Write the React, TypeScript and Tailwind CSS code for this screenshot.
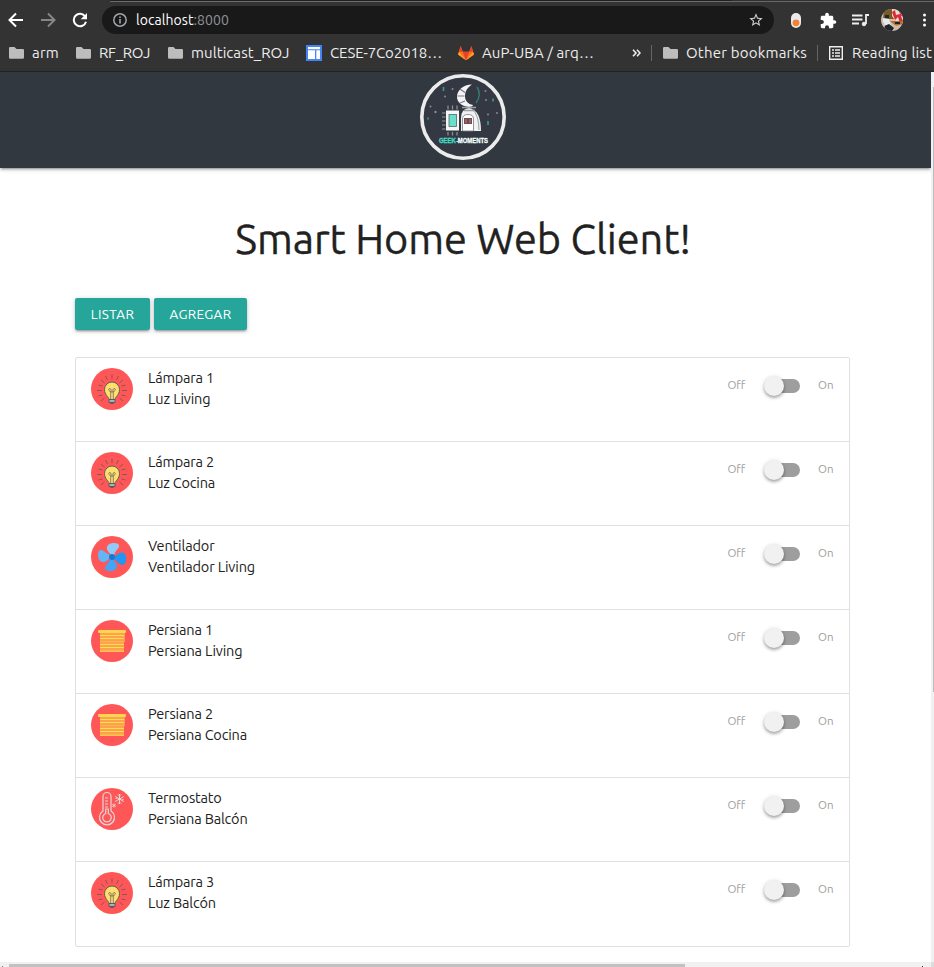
import { useLayoutEffect, useRef, type ReactNode } from "react";

/** Single-line label that spaces its letters to fill a given width. */
function Label({ text, width, className = "", children }: { text: string; width: number; className?: string; children?: ReactNode }) {
  const ref = useRef<HTMLSpanElement>(null);
  useLayoutEffect(() => {
    const el = ref.current;
    if (!el) return;
    el.style.letterSpacing = "0px";
    const natural = el.getBoundingClientRect().width;
    el.style.letterSpacing = `${(width - natural) / text.length}px`;
  }, [text, width]);
  return (
    <span ref={ref} className={`inline-block shrink-0 whitespace-pre ${className}`}>
      {children ?? text}
    </span>
  );
}

function Folder() {
  return (
    <svg className="h-[14px] w-[15px] shrink-0" viewBox="0 0 15 14">
      <path d="M1.5 1h4l2 2h6A1.3 1.3 0 0 1 15 4.3v7.2a1.3 1.3 0 0 1-1.3 1.3H1.3A1.3 1.3 0 0 1 0 11.500V2.300A1.3 1.3 0 0 1 1.500 1z" fill="#bdbdbd" />
    </svg>
  );
}

function Toolbar() {
  return (
    <div className="flex h-9 shrink-0 items-center">
      <svg className="ml-2 h-4 w-4 shrink-0" viewBox="0 0 16 16" fill="none" stroke="#fff" strokeWidth="2">
        <path d="M15 8H2M8 1.500L1.500 8L8 14.500" />
      </svg>
      <svg className="ml-4 h-4 w-4 shrink-0" viewBox="0 0 16 16" fill="none" stroke="#868686" strokeWidth="2">
        <path d="M1 8h13M8 1.500L14.500 8L8 14.500" />
      </svg>
      <svg className="ml-4 h-4 w-4 shrink-0" viewBox="0 0 16 16">
        <path d="M13.200 4.600A6.200 6.200 0 1 0 14 9.700" fill="none" stroke="#fff" strokeWidth="2" />
        <path d="M15 1v6.300H8.700z" fill="#fff" />
      </svg>
      <div className="ml-[14px] flex h-7 w-[672px] shrink-0 items-center rounded-full bg-[#191919] pl-[11px] pr-[10px]">
        <svg className="h-[14px] w-[14px]" viewBox="0 0 14 14">
          <circle cx="7" cy="7" r="6.200" fill="none" stroke="#a2a5a9" strokeWidth="1.500" />
          <path d="M7 6v4.500M7 3.500v1.600" stroke="#a2a5a9" strokeWidth="1.600" />
        </svg>
        <Label text="localhost:8000" width={93} className="ml-[9px] text-sm leading-5 text-white">
          localhost<span className="text-[#909499]">:8000</span>
        </Label>
        <svg className="ml-auto h-4 w-4" viewBox="0 0 24 24" fill="#d0d2d5">
          <path d="M22 9.240l-7.190-.62L12 2 9.190 8.630 2 9.240l5.460 4.730L5.820 21 12 17.270 18.180 21l-1.630-7.030L22 9.240zM12 15.400l-3.760 2.270 1-4.280-3.320-2.880 4.380-.38L12 6.100l1.710 4.040 4.380.38-3.320 2.880 1 4.280L12 15.400z" />
        </svg>
      </div>
      <svg className="ml-[17px] h-[15px] w-[10px] shrink-0" viewBox="0 0 10 15">
        <rect width="10" height="15" rx="5" fill="#e8eaed" />
        <circle cx="5" cy="9.800" r="3.400" fill="#f58233" />
      </svg>
      <svg className="ml-[19px] h-[17px] w-[17px] shrink-0" viewBox="1 0 23 23" fill="#fff">
        <path d="M20.500 11H19V7c0-1.100-.9-2-2-2h-4V3.500C13 2.120 11.880 1 10.500 1S8 2.120 8 3.500V5H4c-1.100 0-1.990.9-1.990 2v3.800H3.500c1.490 0 2.700 1.210 2.700 2.700s-1.210 2.700-2.700 2.700H2V20c0 1.100.9 2 2 2h3.800v-1.500c0-1.490 1.210-2.700 2.700-2.700 1.490 0 2.700 1.210 2.700 2.700V22H17c1.100 0 2-.9 2-2v-4h1.500c1.380 0 2.500-1.120 2.500-2.500S21.880 11 20.500 11z" />
      </svg>
      <svg className="ml-[15px] h-[15px] w-[18px] shrink-0" viewBox="0 0 18 15" fill="none" stroke="#eee" strokeWidth="1.800">
        <path d="M0 2.500h10.500M0 6.500h10.500M0 10.500h7M14 11V2h3" />
        <circle cx="12" cy="11" r="1.800" fill="#eee" strokeWidth="1" />
      </svg>
      <svg className="ml-[11px] h-[22px] w-[22px] shrink-0 overflow-hidden rounded-full" viewBox="0 0 22 22">
        <rect width="22" height="22" fill="#c9beb0" />
        <path d="M3 0h8v5l3 2v3H2z" fill="#7a5a22" />
        <path d="M11 0h11v14h-4l-4-3-3-4z" fill="#e8dcd9" />
        <path d="M11 3l3-2 1 5 4-1 3 7-3 2-2-6-3 3zM18 1l4 3v4l-3-2z" fill="#df2836" />
        <path d="M9 12h13v3l-7 2z" fill="#b46e2c" />
        <path d="M2 9l6 1 2 7-5 2-3-4z" fill="#e6e9ed" />
        <path d="M4 6h4v3H4zM3 17l5-2 5 4-2 3H4zM14 13h5v2h-5z" fill="#20252c" />
        <path d="M1 15l2-2 1 6zM12 16l6 1-4 4z" fill="#d5bc9c" />
      </svg>
      <svg className="ml-[20px] h-4 w-[3px] shrink-0" viewBox="0 0 3 16" fill="#fff">
        <circle cx="1.500" cy="3" r="1.500" /><circle cx="1.500" cy="8" r="1.500" /><circle cx="1.500" cy="13" r="1.500" />
      </svg>
    </div>
  );
}

function Bookmarks() {
  return (
    <div className="flex h-[30px] shrink-0 items-center pl-[9px] text-[15px] leading-5 text-[#ededed]">
      <Folder />
      <Label text="arm" width={27} className="ml-2" />
      <div className="w-[17px] shrink-0" />
      <Folder />
      <Label text="RF_ROJ" width={51} className="ml-[8px]" />
      <div className="w-[18px] shrink-0" />
      <Folder />
      <Label text="multicast_ROJ" width={98.500} className="ml-[8px]" />
      <svg className="ml-[16.500px] h-4 w-4 shrink-0" viewBox="0 0 16 16">
        <rect width="16" height="16" fill="#4285f4" />
        <path d="M2 2h12v2.200H2zM2 5.300h7V14H2zM10.300 5.300H14V14h-3.700z" fill="#fff" />
      </svg>
      <Label text="CESE-7Co2018…" width={112} className="ml-2" />
      <svg className="ml-[16px] h-4 w-4 shrink-0" viewBox="0 0 16 16">
        <path d="M0 9.500L2.600 1l2.200 5.800h6.400L13.400 1 16 9.500 8 15.300z" fill="#fc6d26" />
        <path d="M4.800 6.800h6.400L8 15.300z" fill="#e24329" />
        <path d="M0 9.500l1-2.700L8 15.300zM16 9.500l-1-2.700L8 15.300z" fill="#fca326" />
        <path d="M1 6.800L2.600 1l2.200 5.800zM11.200 6.800L13.400 1 15 6.800z" fill="#e24329" />
      </svg>
      <Label text="AuP-UBA / arq…" width={112} className="ml-2" />
      <svg className="ml-[38px] h-[8px] w-[9px] shrink-0" viewBox="0 0 9 8" fill="none" stroke="#eee" strokeWidth="1.600">
        <path d="M1 .8L4 4L1 7.200M5 .8L8 4L5 7.200" />
      </svg>
      <div className="ml-[10px] h-4 w-px shrink-0 bg-[#666]" />
      <div className="w-[11px] shrink-0" />
      <Folder />
      <Label text="Other bookmarks" width={121} className="ml-2" />
      <div className="ml-[10px] h-4 w-px shrink-0 bg-[#666]" />
      <svg className="ml-[11px] h-[14px] w-[14px] shrink-0" viewBox="0 0 14 14" fill="none" stroke="#eee" strokeWidth="1.400">
        <path d="M.7.7h12.600v12.600H.7zM3 4h2M6 4h5M3 7h2M6 7h5M3 10h2M6 10h5" />
      </svg>
      <Label text="Reading list" width={80} className="ml-[9px]" />
    </div>
  );
}

function Logo() {
  return (
    <svg className="h-[90px] w-[90px]" viewBox="0 0 90 90">
      <circle cx="45" cy="45" r="41.200" fill="#343843" stroke="#ececec" strokeWidth="3.600" />
      <path d="M54 12.500c-9 0-15 6-15 12.500 0 5 4 9 12 10 2 0 4-1 4-2-5-1-8-4-8-9s3-9 7-11.500z" fill="#f4f4f4" />
      <path d="M39.500 24h7M42 17l5 3.500M42 31l5-2" stroke="#777b84" strokeWidth="1.200" />
      <path d="M59 15q5 8-1 16" fill="none" stroke="#39766f" strokeWidth="1.500" />
      <path d="M43 59V46q0-9 8-10 12 2 12 23z" fill="#f1f1f1" />
      <path d="M54 37q7 6 7 21" fill="none" stroke="#8aa5a4" strokeWidth="1" />
      <path d="M44 35.500h14M46 38.500h11" stroke="#9da0a8" strokeWidth="1.500" />
      <path d="M44.500 59V47q0-4.500 5.500-4.500t5.500 4.500v12z" fill="#fff" stroke="#777a82" strokeWidth=".8" />
      <rect x="46" y="46" width="8" height="6" fill="#555760" />
      <path d="M48 47v4M52 47v4" stroke="#e64e47" strokeWidth="1.700" />
      <path d="M30 33.500v4M34.500 33.500v4M39 33.500v4M30 60v3.500M34.500 60v3.500M39 60v3.500M24 41h3.500M24 45h3.500M24 49h3.500M24 53h3.500M24 57h3.500" stroke="#8f939b" strokeWidth="1.200" />
      <rect x="28" y="38.500" width="13" height="20" fill="#f5f5f5" />
      <rect x="31" y="42.500" width="7.500" height="12" fill="#67dfcb" stroke="#56656b" strokeWidth=".8" />
      <g fill="#858993">
        <circle cx="27" cy="24.500" r="1" /><circle cx="34.500" cy="17" r="1" /><circle cx="67.500" cy="19" r="1" />
        <circle cx="68" cy="28" r="1" /><circle cx="12.500" cy="34.500" r="1" /><circle cx="17.500" cy="40" r="1.200" />
        <circle cx="79" cy="41" r="1" /><circle cx="70" cy="42.500" r="1" />
      </g>
      <path d="M25.500 15v4M75 26.500v3M70 49v4M10 45.500v2" stroke="#399b91" strokeWidth="1.600" />
      <text x="21" y="71" textLength="49" lengthAdjust="spacingAndGlyphs" fontFamily="Liberation Sans, sans-serif" fontSize="7" fontWeight="900" strokeWidth=".3" fill="url(#wordmark)" stroke="url(#wordmark)">
        GEEK-MOMENTS
      </text>
      <linearGradient id="wordmark" gradientUnits="userSpaceOnUse" x1="21" y1="0" x2="70" y2="0">
        <stop offset=".375" stopColor="#42d7c1" />
        <stop offset=".375" stopColor="#fff" />
      </linearGradient>
    </svg>
  );
}

type Kind = "bulb" | "fan" | "blind" | "thermo";

function DeviceIcon({ kind }: { kind: Kind }) {
  return (
    <svg className="h-[42px] w-[42px] shrink-0" viewBox="0 0 42 42">
      <circle cx="21" cy="21" r="21" fill="#ff5757" />
      {kind === "bulb" && (
        <g fill="none" stroke="#55545a" strokeWidth=".9">
          <path d="M21 6.500v4.500M14.500 8l2 4M27.500 8l-2 4M10 12l3.500 3M32 12l-3.500 3M7.500 17l4 1M34.500 17l-4 1M6 22.500h5M36 22.500h-5M7.500 28l4-1M34.500 28l-4-1M10 33l3.500-3M32 33l-3.500-3" strokeWidth=".7" />
          <path d="M18 31.500c0-2.500-4.500-4.500-4.500-10a7.500 7.500 0 0 1 15 0c0 5.500-4.500 7.500-4.500 10z" fill="#ffe06e" />
          <path d="M19.700 31V24l-1-1c-1.500-.5-1.200-2.800.3-2.500s1 2.500 1 3.500h2c0-1-.5-3.200 1-3.500s1.800 2 .3 2.500l-1 1v7" strokeWidth=".7" />
          <path d="M18 31.500h6v3h-6z" fill="#9fb4bd" />
          <path d="M19.500 35.500h3" />
        </g>
      )}
      {kind === "fan" && (
        <>
          <path d="M21 21c-2-5-6-6-5-10 1-5 11-5 12-2 1 4-5 5-5 12z" fill="#90caf9" />
          <path d="M21 21c-5 2-5 6-10 5-5-2-5-10-2-12 4-1 6 5 12 5z" fill="#64b5f6" />
          <path d="M21 21c6-1 7-6 12-4 4 3 2 12-1 12-5 0-5-5-11-6z" fill="#2196f3" />
          <path d="M21 21c1 5 6 6 5 10-1 5-10 5-12 2-1-4 5-5 5-12z" fill="#42a5f5" />
          <circle cx="21" cy="21" r="3" fill="#1976d2" />
        </>
      )}
      {kind === "blind" && (
        <>
          <rect x="9" y="11" width="24" height="20.500" fill="#ffb24d" />
          <path d="M9 15.500h24M9 18.500h24M9 24.500h24M9 27.500h24" stroke="#ffdf52" strokeWidth="1.100" />
          <path d="M9 14h24M9 17h24M9 20h24M9 23h24M9 26h24M9 29h24" stroke="#fb8b4b" strokeWidth=".8" />
          <rect x="7" y="10" width="28" height="3" rx="1" fill="#ffd54f" />
          <path d="M33.500 13v9" stroke="#ffb74d" strokeWidth=".7" />
          <path d="M9 31.500h24" stroke="#ffc551" />
        </>
      )}
      {kind === "thermo" && (
        <g fill="none" stroke="#e2d8da" strokeWidth="1.200">
          <path d="M12 23V8.500a4 4 0 0 1 8 0V23a7.500 7.500 0 1 1-8 0z" />
          <path d="M14.700 25.500V21h2.600v4.500a4.300 4.300 0 1 1-2.600 0zM14 10h3M14 13h3M14 16h3M14 19h3" />
          <path d="M28.500 6v10M24.200 8.500l8.600 5M32.800 8.500l-8.600 5M27 6.500l1.500 1.500L30 6.500M27 15.500l1.500-1.500 1.500 1.500M24.500 10.500l2-.5M32.500 11.500l-2 .5" strokeWidth="1" />
          <path d="M23 15.500v4M21.200 16.500l3.600 2M24.800 16.500l-3.600 2" strokeWidth=".9" />
        </g>
      )}
    </svg>
  );
}

const devices: { name: string; nameWidth: number; detail: string; detailWidth: number; kind: Kind }[] = [
  { name: "Lámpara 1", nameWidth: 66, detail: "Luz Living", detailWidth: 62.500, kind: "bulb" },
  { name: "Lámpara 2", nameWidth: 66, detail: "Luz Cocina", detailWidth: 67, kind: "bulb" },
  { name: "Ventilador", nameWidth: 66.500, detail: "Ventilador Living", detailWidth: 107, kind: "fan" },
  { name: "Persiana 1", nameWidth: 65, detail: "Persiana Living", detailWidth: 94.500, kind: "blind" },
  { name: "Persiana 2", nameWidth: 65, detail: "Persiana Cocina", detailWidth: 99, kind: "blind" },
  { name: "Termostato", nameWidth: 73.500, detail: "Persiana Balcón", detailWidth: 99.500, kind: "thermo" },
  { name: "Lámpara 3", nameWidth: 66, detail: "Luz Balcón", detailWidth: 68, kind: "bulb" },
];

function Switch() {
  return (
    <div className="flex h-[34px] items-center text-[11.5px] text-[#9e9e9e]">
      <Label text="Off" width={17.500} />
      <div className="ml-[20px] mr-[18px] mt-0.5 flex h-[14px] w-[35px] items-center rounded-full bg-[#9e9e9e]">
        <div className="-ml-px h-5 w-5 rounded-full bg-[#f1f1f1] shadow-[0_2px_3px_rgba(0,0,0,0.28),0_1px_5px_rgba(0,0,0,0.15)]" />
      </div>
      <Label text="On" width={15.500} className="mr-[0.500px]" />
    </div>
  );
}

const buttonClass =
  "flex h-8 items-center justify-center rounded-[2px] bg-[#26a69a] pt-px text-[13.5px] text-white shadow-[0_2px_2px_0_rgba(0,0,0,0.14),0_3px_1px_-2px_rgba(0,0,0,0.12),0_1px_5px_0_rgba(0,0,0,0.2)]";

export default function App() {
  return (
    <div className="flex h-[967px] w-[934px] flex-col overflow-hidden bg-white font-['Ubuntu','Noto_Sans',sans-serif] text-[#212121]">
      <div className="flex h-[72px] shrink-0 flex-col border-b border-[#242424] bg-[#333333]">
        <div className="flex h-0.5 shrink-0">
          <div className="w-[110px] bg-[#333333]" />
          <div className="w-[622px] border-b border-[#6b6b6b] bg-[#202020]" />
          <div className="grow border-b border-[#686868] bg-[#303030]" />
        </div>
        <Toolbar />
        <Bookmarks />
      </div>
      <div className="flex h-[890px] shrink-0">
        <div className="w-[931px]">
          <header className="flex h-24 justify-center bg-[#31383f] pr-[5px] shadow-[0_2px_2px_0_rgba(0,0,0,0.14),0_3px_1px_-2px_rgba(0,0,0,0.12),0_1px_5px_0_rgba(0,0,0,0.2)]">
            <Logo />
          </header>
          <main className="ml-[75px] w-[775px]">
            <h1 className="flex h-[130px] justify-center pt-[45px] text-[41.5px] leading-[52px] [-webkit-text-stroke:0.35px_#212121]">
              <Label text="Smart Home Web Client!" width={455.500} className="-mr-px" />
            </h1>
            <div className="flex gap-1">
              <button className={`${buttonClass} w-[75px]`}><Label text="LISTAR" width={43.500} /></button>
              <button className={`${buttonClass} w-[93px]`}><Label text="AGREGAR" width={62} /></button>
            </div>
            <ul className="mt-[27px] rounded-[2px] border border-[#e0e0e0]">
              {devices.map((d) => (
                <li key={d.name} className="flex h-[84px] border-b border-[#e0e0e0] px-[15px] pt-[10px] last:border-b-0">
                  <DeviceIcon kind={d.kind} />
                  <div className="-mt-px ml-[15px] flex flex-col items-start text-[14.5px] leading-[21px]">
                    <Label text={d.name} width={d.nameWidth} />
                    <Label text={d.detail} width={d.detailWidth} />
                  </div>
                  <div className="ml-auto"><Switch /></div>
                </li>
              ))}
            </ul>
          </main>
        </div>
        <div className="flex w-[3px] justify-end bg-[#f1f1f1] pt-[15px]">
          <div className="h-[605px] w-px bg-[#bcbcbc]" />
        </div>
      </div>
      <div className="flex h-[5px] shrink-0 items-end bg-[#f1f1f1]">
        <div className="ml-0.5 h-px w-px bg-[#777]" />
        <div className="ml-[6px] h-[3px] w-[676px] bg-[#c1c1c1]" />
        <div className="ml-[237px] h-px w-px bg-[#333]" />
        <div className="ml-auto h-[5px] w-[3px] bg-[#dcdcdc]" />
      </div>
    </div>
  );
}
